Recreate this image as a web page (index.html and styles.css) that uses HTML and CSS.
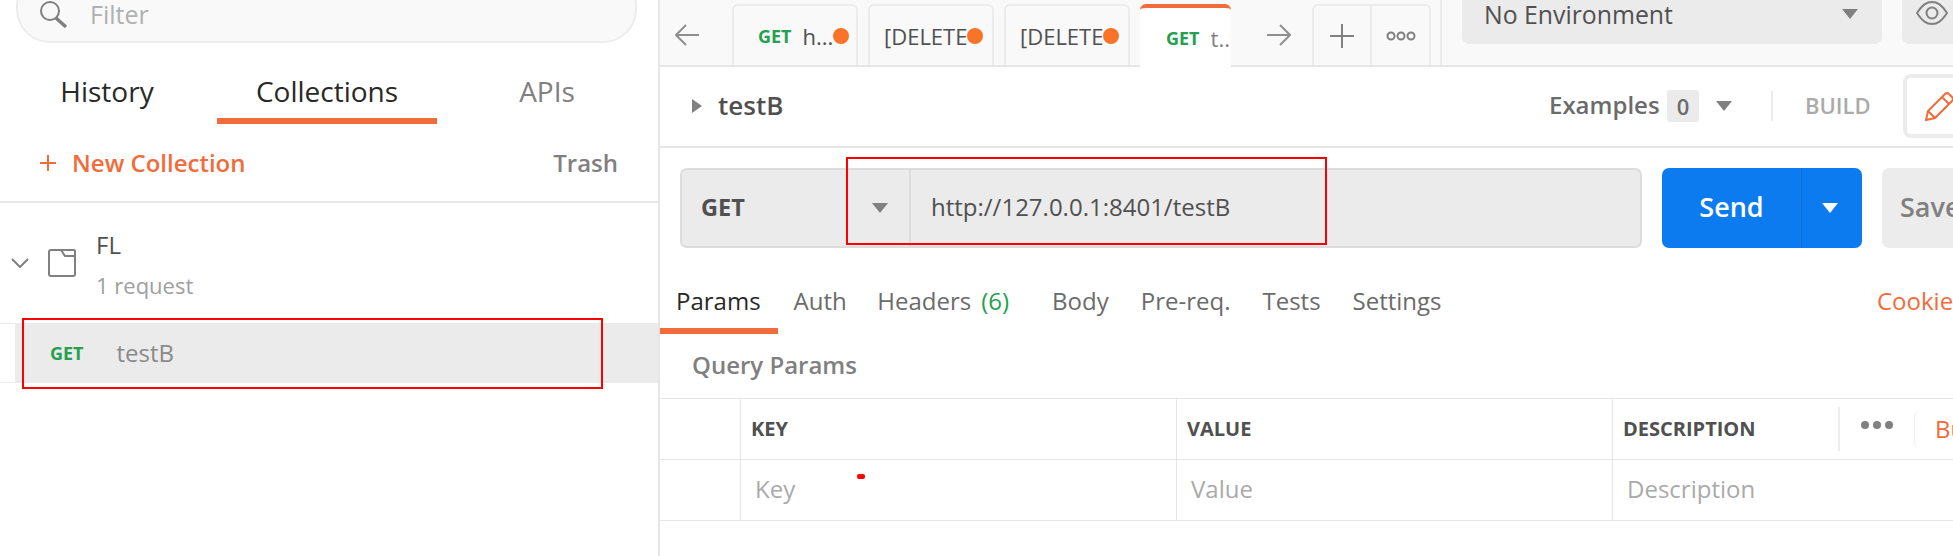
FILE: index.html
```html
<!DOCTYPE html>
<html lang="en">
<head>
<meta charset="utf-8">
<title>Postman</title>
<link rel="stylesheet" href="styles.css">
</head>
<body>
<div class="app">
  <aside class="side">
    <div class="search">
      <svg class="search-icon" width="28" height="28" viewBox="0 0 28 28"><circle cx="10" cy="11" r="9" fill="none" stroke="#808080" stroke-width="2"/><path d="M16 18l10 9" stroke="#808080" stroke-width="3.5" fill="none"/></svg>
      <span class="filter">Filter</span>
    </div>
    <div class="side-tabs">
      <div class="side-tab dark">History</div>
      <div class="side-tab dark active">Collections</div>
      <div class="side-tab">APIs</div>
    </div>
    <div class="side-tools">
      <svg class="plus" width="16" height="16" viewBox="0 0 16 16"><path d="M8 0v16M0 8h16" stroke="#f26b3a" stroke-width="2"/></svg>
      <span class="new">New Collection</span>
      <span class="trash">Trash</span>
    </div>
    <div class="coll">
      <svg class="chev" width="18" height="10" viewBox="0 0 18 10"><path d="M1 1l8 8 8-8" fill="none" stroke="#808080" stroke-width="2"/></svg>
      <svg class="folder" width="28" height="28" viewBox="0 0 28 28"><path d="M3 1h10l4 6h9a1 1 0 0 1 1 1v17a2 2 0 0 1-2 2H3a2 2 0 0 1-2-2V3a2 2 0 0 1 2-2zM13 1h13a1 1 0 0 1 1 1v6" fill="none" stroke="#808080" stroke-width="2"/></svg>
      <div class="coll-text">
        <div class="coll-name">FL</div>
        <div class="coll-count">1 request</div>
      </div>
    </div>
    <div class="req-row">
      <div class="req-gutter"></div>
      <div class="req-body"><span class="get small">GET</span><span class="req-name">testB</span></div>
    </div>
  </aside>
  <main class="main">
    <header class="bar">
      <svg class="arrow-l" width="24" height="22" viewBox="0 0 24 22"><path d="M24 11H2M11 1L1 11l10 10" fill="none" stroke="#8f8f8f" stroke-width="2"/></svg>
      <div class="tab tab-a"><span class="get small">GET</span><span class="tab-t">h...</span><i class="dot"></i></div>
      <div class="tab tab-b"><span class="tab-t">[DELETE</span><i class="dot"></i></div>
      <div class="tab tab-b"><span class="tab-t">[DELETE</span><i class="dot"></i></div>
      <div class="tab tab-on"><span class="get small">GET</span><span class="tab-t">t...</span></div>
      <svg class="arrow-r" width="24" height="22" viewBox="0 0 24 22"><path d="M0 11h22M13 1l10 10-10 10" fill="none" stroke="#8f8f8f" stroke-width="2"/></svg>
      <div class="tool tool-plus"><svg width="24" height="24" viewBox="0 0 24 24"><path d="M12 0v24M0 12h24" stroke="#808080" stroke-width="2"/></svg></div>
      <div class="tool tool-more"><svg width="30" height="10" viewBox="0 0 30 10"><g fill="none" stroke="#808080" stroke-width="2"><circle cx="5" cy="5" r="3.5"/><circle cx="15" cy="5" r="3.5"/><circle cx="25" cy="5" r="3.5"/></g></svg></div>
      <i class="bar-sep"></i>
      <div class="env"><span class="env-name">No Environment</span><i class="caret env-caret"></i></div>
      <div class="eye-box"><svg width="32" height="24" viewBox="0 0 32 24"><path d="M1 12C7 3 11 1 16 1s9 2 15 11c-6 9-10 11-15 11S7 21 1 12z" fill="none" stroke="#808080" stroke-width="2"/><circle cx="16" cy="12" r="5.5" fill="none" stroke="#808080" stroke-width="2"/></svg></div>
    </header>
    <section class="title-row">
      <i class="tri"></i>
      <span class="title">testB</span>
      <span class="examples">Examples</span>
      <span class="badge">0</span>
      <i class="caret ex-caret"></i>
      <i class="vsep"></i>
      <span class="build">BUILD</span>
      <div class="pencil-box"><svg width="30" height="30" viewBox="0 0 30 30"><path d="M1 29l2-9L20 3a3 3 0 0 1 4 0l3 3a3 3 0 0 1 0 4L10 27zM3 20l7 7M17 6l7 7" fill="none" stroke="#f26b3a" stroke-width="2"/></svg></div>
    </section>
    <section class="url-row">
      <div class="url-box">
        <div class="method"><span class="method-name">GET</span><i class="caret"></i></div>
        <div class="url">http://127.0.0.1:8401/testB</div>
      </div>
      <div class="send"><span class="send-t">Send</span><span class="send-arrow"><i class="caret white"></i></span></div>
      <div class="save">Save</div>
    </section>
    <nav class="req-tabs">
      <span class="rt rt-on">Params</span>
      <span class="rt rt-a">Auth</span>
      <span class="rt rt-h">Headers<b class="count">(6)</b></span>
      <span class="rt">Body</span>
      <span class="rt">Pre-req.</span>
      <span class="rt">Tests</span>
      <span class="rt">Settings</span>
      <span class="cookies">Cookies</span>
    </nav>
    <div class="qp">Query Params</div>
    <div class="table">
      <div class="cell"></div>
      <div class="cell th">KEY</div>
      <div class="cell th">VALUE</div>
      <div class="cell th th-d">
        <span class="th-dt">DESCRIPTION</span>
        <i class="th-sep"></i>
        <svg class="dots" width="32" height="10" viewBox="0 0 32 10"><circle cx="4" cy="5" r="4" fill="#808080"/><circle cx="16" cy="5" r="4" fill="#808080"/><circle cx="28" cy="5" r="4" fill="#808080"/></svg>
        <span class="bulk">Bulk Edit</span>
      </div>
      <div class="cell"></div>
      <div class="cell ph">Key</div>
      <div class="cell ph">Value</div>
      <div class="cell ph">Description</div>
    </div>
  </main>
</div>
<div class="mark mark-a"></div>
<div class="mark mark-b"></div>
<div class="mark-dot"></div>
</body>
</html>
```

FILE: styles.css
```css
* { box-sizing: border-box; }
html, body { margin: 0; height: 100%; overflow: hidden; background: #fff; }
body { font-family: "Open Sans", "Noto Sans", sans-serif; color: #808080; position: relative; }
i { display: block; font-style: normal; }
.app { display: flex; width: 1953px; height: 556px; overflow: hidden; }

/* sidebar */
.side { flex: 0 0 660px; height: 556px; border-right: 2px solid #e6e6e6; overflow: hidden; }
.search { display: flex; align-items: center; width: 621px; height: 71px; margin: -28px 0 0 16px; padding: 12px 0 0 22px; background: #f9f9f9; border: 2px solid #ececec; border-radius: 34px; }
.search-icon { flex: none; }
.filter { margin-left: 22px; padding-top: 1px; font-size: 25px; line-height: 30px; color: #b0b0b0; }
.side-tabs { display: grid; grid-template-columns: repeat(3, 220px); height: 81px; margin-left: -3px; }
.side-tab { padding-top: 30px; font-size: 28px; line-height: 36px; text-align: center; color: #808080; }
.side-tab.dark { color: #282828; }
.side-tab.active { border-bottom: 6px solid #f26b3a; }
.side-tools { display: flex; align-items: center; height: 79px; padding: 0 40px 0 40px; border-bottom: 2px solid #e6e6e6; }
.plus { flex: none; }
.new { margin-left: 16px; font-size: 24px; font-weight: 600; line-height: 32px; color: #f26b3a; }
.trash { margin-left: auto; font-size: 24px; font-weight: 600; line-height: 32px; color: #808080; }
.coll { display: flex; height: 120px; padding: 0 0 0 11px; }
.chev { flex: none; margin-top: 55px; }
.folder { flex: none; margin: 46px 0 0 19px; }
.coll-text { margin-left: 20px; padding-top: 22px; }
.coll-name { font-size: 24px; line-height: 40px; color: #505050; }
.coll-count { font-size: 22px; line-height: 40px; color: #a0a0a0; }
.req-row { display: flex; height: 60px; }
.req-gutter { flex: 0 0 16px; background: #fff; border-top: 1px solid #ececec; border-bottom: 1px solid #ececec; border-right: 1px solid #ececec; }
.req-body { flex: 1; display: flex; align-items: center; background: #ebebeb; padding-left: 34px; }
.get { color: #26a04f; font-weight: 700; }
.small { font-size: 18px; line-height: 24px; }
.req-name { margin-left: 33px; font-size: 24px; line-height: 32px; color: #8a8a8a; }

/* main */
.main { flex: 0 0 1293px; height: 556px; overflow: hidden; }
.bar { display: flex; align-items: flex-start; height: 67px; background: #f9f9f9; border-bottom: 2px solid #e6e6e6; }
.arrow-l { flex: none; margin: 24px 33px 0 15px; }
.tab { flex: none; display: flex; align-items: center; width: 126px; height: 61px; margin: 4px 10px 0 0; border: 2px solid #ececec; border-bottom: 0; border-radius: 6px 6px 0 0; overflow: hidden; }
.tab-a { padding-left: 24px; }
.tab-a .tab-t { margin-left: 11px; }
.tab-b { padding-left: 14px; }
.tab-t { font-size: 22px; line-height: 32px; color: #505050; white-space: nowrap; }
.dot { flex: none; width: 16px; height: 16px; margin: 0 9px 0 auto; border-radius: 50%; background: #f97428; }
.tab-on { width: 91px; height: 63px; padding-left: 26px; background: #fff; border: 0; border-top: 4px solid #f26b3a; margin-right: 0; }
.tab-on .tab-t { margin-left: 11px; color: #808080; }
.arrow-r { flex: none; margin: 24px 21px 0 36px; }
.tool { flex: none; display: flex; align-items: center; justify-content: center; height: 61px; margin-top: 4px; background: #f9f9f9; border: 2px solid #ececec; border-bottom: 0; }
.tool-plus { width: 60px; border-radius: 6px 0 0 0; }
.tool-more { width: 59px; border-left: 0; border-radius: 0 6px 0 0; }
.bar-sep { flex: none; width: 2px; height: 65px; margin-left: 9px; background: #ececec; }
.env { flex: none; display: flex; align-items: center; width: 420px; height: 64px; margin: -20px 0 0 20px; padding: 4px 24px 0 22px; background: #ebebeb; border-radius: 7px; }
.env-name { font-size: 24.8px; line-height: 28px; color: #505050; }
.caret { flex: none; width: 0; height: 0; border-left: 8px solid transparent; border-right: 8px solid transparent; border-top: 10px solid #808080; }
.env-caret { margin-left: auto; }
.eye-box { flex: none; display: flex; align-items: center; width: 80px; height: 64px; margin: -20px 0 0 20px; padding: 2px 0 0 14px; background: #ebebeb; border-radius: 7px; }

.title-row { display: flex; align-items: center; height: 81px; padding: 0 0 1px 32px; border-bottom: 2px solid #e6e6e6; }
.tri { flex: none; width: 0; height: 0; border-top: 7px solid transparent; border-bottom: 7px solid transparent; border-left: 10px solid #808080; }
.title { margin: 0 0 2px 16px; font-size: 26px; font-weight: 600; line-height: 34px; color: #505050; width: 831px; flex: none; }
.examples { margin-bottom: 3px; font-size: 24px; font-weight: 600; line-height: 32px; color: #6b6b6b; flex: none; width: 118px; }
.badge { flex: none; width: 32px; height: 32px; background: #ebebeb; border-radius: 3px; text-align: center; font-size: 22px; font-weight: 600; line-height: 32px; color: #6b6b6b; }
.ex-caret { margin-left: 17px; }
.vsep { flex: none; width: 2px; height: 30px; margin-left: 39px; background: #ececec; }
.build { flex: none; margin: 0 0 3px 32px; font-size: 22px; font-weight: 600; line-height: 30px; color: #aaaaaa; width: 98px; }
.pencil-box { flex: none; display: flex; align-items: center; width: 70px; height: 64px; padding-left: 18px; background: #fff; border: 4px solid #ececec; border-right: 0; border-radius: 8px 0 0 8px; }

.url-row { display: flex; height: 102px; padding: 20px 0 0 20px; }
.url-box { flex: none; display: flex; width: 962px; height: 80px; background: #ebebeb; border: 2px solid #dcdcdc; border-radius: 7px; }
.method { flex: none; display: flex; align-items: center; width: 229px; padding: 0 21px 0 19px; border-right: 2px solid #dcdcdc; }
.method-name { flex: 1; padding-bottom: 2px; font-size: 23.5px; font-weight: 700; line-height: 32px; color: #505050; }
.url { padding-left: 20px; font-size: 24px; line-height: 74px; color: #505050; }
.send { flex: none; display: flex; width: 200px; height: 80px; margin-left: 20px; background: #0b7bef; border-radius: 7px; }
.send-t { flex: 0 0 139px; text-align: center; font-size: 27px; font-weight: 600; line-height: 78px; color: #fff; }
.send-arrow { flex: 1; display: flex; align-items: center; justify-content: center; padding-right: 5px; border-left: 1px solid #0a6fd8; }
.caret.white { border-top-color: #fff; }
.save { flex: none; width: 100px; height: 80px; margin-left: 20px; padding-left: 18px; background: #ececec; border-radius: 7px; font-size: 27px; font-weight: 600; line-height: 78px; color: #808080; }

.req-tabs { display: flex; height: 62px; margin-top: 22px; }
.rt { flex: none; height: 62px; padding: 10px 16px 0; font-size: 24px; line-height: 38px; color: #6b6b6b; }
.rt-on { padding: 10px 17px 0 16px; color: #282828; border-bottom: 6px solid #f26b3a; }
.rt-a { padding-right: 14.5px; }
.rt-h { padding-right: 27px; }
.count { margin-left: 10px; font-weight: 400; color: #26a04f; }
.cookies { flex: none; width: 76px; margin-left: auto; overflow: hidden; padding-top: 10px; font-size: 24px; line-height: 38px; color: #f26b3a; white-space: nowrap; }
.qp { height: 64px; padding: 13px 0 0 32px; font-size: 24px; font-weight: 600; line-height: 36px; color: #808080; }
.table { display: grid; grid-template-columns: 81px 436px 436px 340px; grid-template-rows: 61px 61px; border-top: 1px solid #e6e6e6; }
.cell { border-right: 1px solid #e6e6e6; border-bottom: 1px solid #e6e6e6; min-width: 0; }
.cell:nth-child(4n) { border-right: 0; }
.th { padding-left: 10px; font-size: 20px; font-weight: 700; line-height: 60px; color: #505050; }
.th-d { display: flex; align-items: center; overflow: hidden; }
.th-dt { flex: 0 0 215px; }
.th-sep { flex: none; width: 2px; height: 44px; background: #ececec; }
.dots { flex: none; margin: -8px 0 0 21px; }
.bulk { flex: none; margin-left: 21px; height: 38px; padding-left: 20px; border-left: 1px solid #ececec; border-radius: 7px; font-size: 24px; font-weight: 400; line-height: 38px; color: #f26b3a; white-space: nowrap; }
.ph { padding-left: 14px; font-size: 24px; line-height: 58px; color: #aaaaaa; }

/* red annotations drawn over the screenshot */
.mark { position: absolute; border: 2px solid #f00; }
.mark-a { left: 22px; top: 318px; width: 581px; height: 71px; }
.mark-b { left: 846px; top: 157px; width: 481px; height: 88px; }
.mark-dot { position: absolute; left: 857px; top: 474px; width: 8px; height: 5px; background: #f00; border-radius: 2px; }
```
